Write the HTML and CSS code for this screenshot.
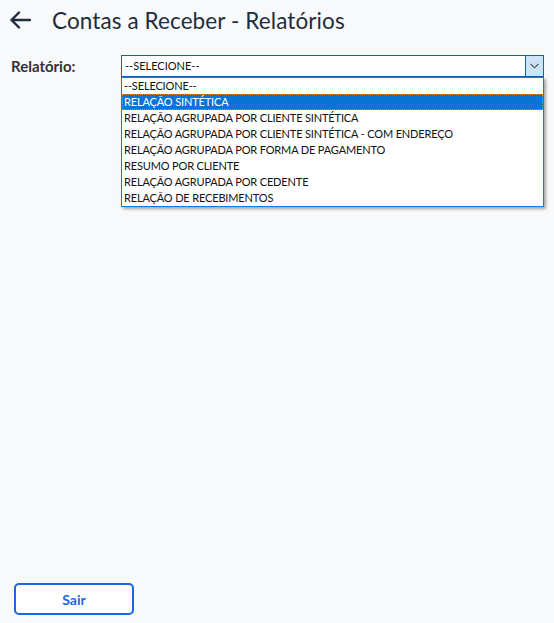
FILE: index.html
```html
<!DOCTYPE html>
<html lang="pt-BR">
<head>
<meta charset="utf-8">
<title>Contas a Receber - Relatórios</title>
<link rel="stylesheet" href="styles.css">
</head>
<body>
<div class="page">
  <header class="header">
    <svg class="back" width="22" height="18" viewBox="0 0 22 18" aria-hidden="true">
      <path d="M21 9H2.5M10 1.5L2.5 9l7.5 7.5" fill="none" stroke="#1f2d3d" stroke-width="2.4" stroke-linecap="round" stroke-linejoin="round"/>
    </svg>
    <h1 class="title">Contas a Receber - Relatórios</h1>
  </header>

  <div class="field">
    <label class="label">Relatório:</label>
    <div class="selectwrap">
      <div class="select">
        <span class="select-value">--SELECIONE--</span>
        <span class="select-btn">
          <svg width="9" height="6" viewBox="0 0 9 6" aria-hidden="true"><path d="M0.5 0.8L4.5 4.8L8.5 0.8" fill="none" stroke="#3a4a5a" stroke-width="1.1"/></svg>
        </span>
      </div>
      <ul class="list">
        <li class="opt">--SELECIONE--</li>
        <li class="opt active">RELAÇÃO SINTÉTICA</li>
        <li class="opt">RELAÇÃO AGRUPADA POR CLIENTE SINTÉTICA</li>
        <li class="opt">RELAÇÃO AGRUPADA POR CLIENTE SINTÉTICA - COM ENDEREÇO</li>
        <li class="opt">RELAÇÃO AGRUPADA POR FORMA DE PAGAMENTO</li>
        <li class="opt">RESUMO POR CLIENTE</li>
        <li class="opt">RELAÇÃO AGRUPADA POR CEDENTE</li>
        <li class="opt">RELAÇÃO DE RECEBIMENTOS</li>
      </ul>
    </div>
  </div>

  <div class="spacer"></div>

  <footer class="footer">
    <button class="btn">Sair</button>
  </footer>
</div>
</body>
</html>
```

FILE: styles.css
```css
* { box-sizing: border-box; }
html, body {
  margin: 0;
  padding: 0;
  background: #f8f9fa;
  font-family: Lato, "Open Sans", Arial, sans-serif;
}
.page {
  height: 623px;
  display: flex;
  flex-direction: column;
}
.header {
  display: flex;
  align-items: center;
  height: 40px;
  padding: 0 0 0 9px;
}
.back { margin-right: 21px; margin-top: 0; }
.title {
  margin: 0;
  font-weight: 400;
  font-size: 22.5px;
  color: #1f2d3d;
  letter-spacing: 0.1px;
}
.field {
  display: flex;
  align-items: flex-start;
  margin-top: 15px;
  padding-left: 11px;
}
.label {
  width: 110px;
  font-weight: 700;
  font-size: 15px;
  color: #333;
  line-height: 22px;
}
.selectwrap {
  width: 423px;
  position: relative;
}
.select {
  height: 22px;
  border: 1px solid #1e5f9e;
  background: #fff;
  display: flex;
  align-items: stretch;
}
.select-value {
  flex: 1;
  font-size: 11px;
  line-height: 20px;
  padding-left: 3px;
  color: #111;
}
.select-btn {
  width: 18px;
  background: #cde4f7;
  border-left: 1px solid #1e5f9e;
  display: flex;
  align-items: center;
  justify-content: center;
}
.list {
  list-style: none;
  margin: 0;
  padding: 0;
  border: 1px solid #1878d6;
  background: #fff;
  box-shadow: 2px 2px 3px rgba(0,0,0,0.35);
  position: absolute;
  left: 0;
  right: 0;
  top: 22px;
}
.opt {
  height: 16px;
  line-height: 16px;
  font-size: 11px;
  padding-left: 2px;
  color: #111;
  white-space: nowrap;
  letter-spacing: -0.15px;
}
.opt.active {
  background: #0a74d4;
  color: #fff;
  outline: 1px dotted #e08a2a;
  outline-offset: -1px;
}
.spacer { flex: 1; }
.footer {
  padding: 0 0 8px 14px;
}
.btn {
  width: 120px;
  height: 32px;
  border: 2px solid #1a66e6;
  border-radius: 5px;
  background: #fff;
  color: #1a66e6;
  font-family: Lato, sans-serif;
  font-weight: 700;
  font-size: 14px;
}
```
